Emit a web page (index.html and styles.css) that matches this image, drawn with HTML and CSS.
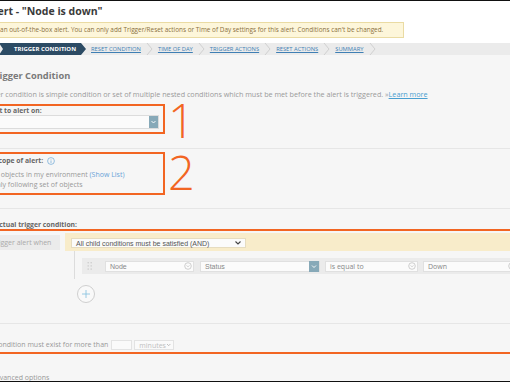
FILE: index.html
```html
<!DOCTYPE html>
<html lang="en">
<head>
    <meta charset="UTF-8">
    <title>Edit Alert - "Node is down"</title>
    <link rel="stylesheet" href="styles.css">
</head>
<body>
<div class="frame">
    <div class="page">
        <!-- header -->
        <div class="header">
            <h1 class="title">Edit Alert - "Node is down"</h1>
            <div class="notice">This is an out-of-the-box alert. You can only add Trigger/Reset actions or Time of Day settings for this alert. Conditions can't be changed.</div>
        </div>

        <!-- wizard steps -->
        <div class="steps">
            <span class="step-active">TRIGGER CONDITION</span>
            <a class="step" href="#">RESET CONDITION</a>
            <svg class="sep" viewBox="0 0 7 12"><polyline points="1,0 6,6 1,12"/></svg>
            <a class="step" href="#">TIME OF DAY</a>
            <svg class="sep" viewBox="0 0 7 12"><polyline points="1,0 6,6 1,12"/></svg>
            <a class="step" href="#">TRIGGER ACTIONS</a>
            <svg class="sep" viewBox="0 0 7 12"><polyline points="1,0 6,6 1,12"/></svg>
            <a class="step" href="#">RESET ACTIONS</a>
            <svg class="sep" viewBox="0 0 7 12"><polyline points="1,0 6,6 1,12"/></svg>
            <a class="step" href="#">SUMMARY</a>
            <svg class="sep" viewBox="0 0 7 12"><polyline points="1,0 6,6 1,12"/></svg>
        </div>

        <div class="content">
            <h2 class="section-title">Trigger Condition</h2>
            <p class="hint">Trigger condition is simple condition or set of multiple nested conditions which must be met before the alert is triggered. &raquo;<a href="#">Learn more</a></p>

            <!-- 1: object to alert on -->
            <div class="marked marked-1">
                <div class="callout">
                    <div class="label">I want to alert on:</div>
                    <div class="select-wide">
                        <span class="drop-btn"><svg viewBox="0 0 9 12"><polyline points="2.5,5 4.5,7 6.5,5"/></svg></span>
                    </div>
                </div>
                <div class="callout-num num-1">1</div>
            </div>

            <div class="divider div-1"></div>

            <!-- 2: scope -->
            <div class="marked marked-2">
                <div class="callout callout-scope">
                    <div class="label label-scope">The scope of alert:
                        <svg class="info" viewBox="0 0 8 8"><circle cx="4" cy="4" r="3.4"/><line x1="4" y1="3.4" x2="4" y2="6"/><line x1="4" y1="2" x2="4" y2="2.6"/></svg>
                    </div>
                    <div class="radio-row"><span class="radio"></span>All objects in my environment <a href="#">(Show List)</a></div>
                    <div class="radio-row"><span class="radio"></span>Only following set of objects</div>
                </div>
                <div class="callout-num num-2">2</div>
            </div>

            <div class="divider div-2"></div>

            <!-- 3: trigger condition -->
            <div class="label label-actual">The actual trigger condition:</div>
            <div class="callout-wide">
                <div class="cond-head">
                    <div class="when">Trigger alert when</div>
                    <div class="and-band">
                        <div class="and-select">
                            <span>All child conditions must be satisfied (AND)</span>
                            <svg viewBox="0 0 8 6"><polyline points="1.5,1.5 4,4 6.5,1.5"/></svg>
                        </div>
                    </div>
                </div>

                <div class="tree">
                    <div class="cond-row">
                        <svg class="handle" viewBox="0 0 6 8">
                            <rect x="0.5" y="0" width="1.4" height="1.4"/><rect x="3.5" y="0" width="1.4" height="1.4"/>
                            <rect x="0.5" y="3.2" width="1.4" height="1.4"/><rect x="3.5" y="3.2" width="1.4" height="1.4"/>
                            <rect x="0.5" y="6.4" width="1.4" height="1.4"/><rect x="3.5" y="6.4" width="1.4" height="1.4"/>
                        </svg>
                        <div class="field field-node"><span>Node</span><svg class="circ" viewBox="0 0 8 8"><circle cx="4" cy="4" r="3.3"/><polyline points="2.6,3.4 4,4.8 5.4,3.4"/></svg></div>
                        <div class="field field-status"><span>Status</span><span class="drop-btn small"><svg viewBox="0 0 10 11"><polyline points="3,4.5 5,6.5 7,4.5"/></svg></span></div>
                        <div class="field field-op"><span>is equal to</span><svg class="circ" viewBox="0 0 8 8"><circle cx="4" cy="4" r="3.3"/><polyline points="2.6,3.4 4,4.8 5.4,3.4"/></svg></div>
                        <div class="field field-val"><span>Down</span><svg class="circ" viewBox="0 0 8 8"><circle cx="4" cy="4" r="3.3"/><polyline points="2.6,3.4 4,4.8 5.4,3.4"/></svg></div>
                    </div>
                </div>

                <div class="add-btn">
                    <svg viewBox="0 0 10 10"><line x1="5" y1="1" x2="5" y2="9"/><line x1="1" y1="5" x2="9" y2="5"/></svg>
                </div>

                <div class="divider div-3"></div>

                <div class="exist-row">
                    <span class="exist-text">The condition must exist for more than</span>
                    <span class="num-input"></span>
                    <span class="unit-select">minutes
                        <svg viewBox="0 0 8 6"><polyline points="1.5,1.5 4,4 6.5,1.5"/></svg>
                    </span>
                </div>
            </div>

            <div class="advanced">Advanced options</div>
        </div>
    </div>
</div>
</body>
</html>
```

FILE: styles.css
```css
* {
    box-sizing: border-box;
}

body {
    margin: 0;
    font-family: 'Open Sans', 'Liberation Sans', sans-serif;
    background: #f6f6f6;
}

.frame {
    height: 382px;
    overflow: hidden;
    border-top: 1px solid #111;
    border-bottom: 1px solid #111;
    background: #f6f6f6;
}

/* the screenshot is cut on the left, so the page starts off-screen */
.page {
    margin-left: -60px;
    width: 570px;
}

.header {
    background: #fff;
    padding: 1px 0 5px;
}

.title {
    margin: 1px 0 0 24px;
    font-size: 10.5px;
    line-height: 16px;
    font-weight: 700;
    color: #3a3a3a;
}

.notice {
    margin: 3px 0 0 30px;
    width: 434px;
    height: 16px;
    padding-left: 9px;
    border: 1px solid #eadba3;
    background: #fdf6da;
    color: #8a7040;
    font-size: 6.4px;
    line-height: 14px;
    white-space: nowrap;
    overflow: hidden;
}

/* wizard */
.steps {
    display: flex;
    align-items: center;
    gap: 5px;
    height: 12px;
    padding-left: 59px;
    background: #ebebeb;
}

.step-active {
    flex-shrink: 0;
    width: 87px;
    height: 12px;
    padding-left: 15px;
    background: #2c4b64;
    color: #fff;
    font-size: 6px;
    font-weight: 700;
    line-height: 12px;
    white-space: nowrap;
    clip-path: polygon(0 0, 82px 0, 87px 50%, 82px 100%, 0 100%, 4px 50%);
}

.step {
    color: #3f7fb4;
    font-size: 5.8px;
    line-height: 12px;
    text-decoration: underline;
    white-space: nowrap;
}

.sep {
    flex-shrink: 0;
    width: 7px;
    height: 12px;
    fill: none;
    stroke: #c9c9c9;
    stroke-width: 0.8;
}

/* content */
.section-title {
    margin: 14px 0 0 50px;
    font-size: 9.3px;
    line-height: 14px;
    font-weight: 700;
    color: #7a7a7a;
}

.hint {
    margin: 6px 0 0 40px;
    font-size: 7.2px;
    line-height: 10px;
    color: #9a9a9a;
    white-space: nowrap;
}

.hint a {
    color: #4a9fd0;
}

.marked {
    display: flex;
    align-items: flex-start;
}

.marked-1 {
    margin-top: 5px;
}

.marked-2 {
    margin-top: 3px;
}

.callout {
    width: 195px;
    margin-left: 30px;
    padding: 1px 4px 3px 9px;
    border: 2px solid #f26522;
}

.callout-scope {
    padding-top: 2px;
}

.label {
    font-size: 6.8px;
    line-height: 8px;
    font-weight: 700;
    color: #666;
    white-space: nowrap;
}

.label-scope {
    display: flex;
    align-items: center;
    gap: 4px;
    line-height: 10px;
}

.info {
    width: 8px;
    height: 8px;
    fill: none;
    stroke: #6aa6d6;
    stroke-width: 0.7;
}

.select-wide {
    display: flex;
    justify-content: flex-end;
    height: 14px;
    border: 1px solid #dcdcdc;
    background: #fbfbfb;
}

.drop-btn {
    display: flex;
    width: 9px;
    height: 12px;
    background: #87a9b8;
}

.drop-btn svg {
    width: 9px;
    height: 12px;
    fill: none;
    stroke: #fff;
    stroke-width: 0.9;
}

.drop-btn.small {
    width: 10px;
    height: 11px;
    margin: -1px 0;
}

.drop-btn.small svg {
    width: 10px;
    height: 11px;
}

.callout-num {
    height: 34px;
    margin: 0 0 -4px 3px;
    font-size: 47px;
    line-height: 34px;
    font-weight: 300;
    color: #f26522;
}

.num-1 {
    margin-top: -1px;
}

.num-2 {
    margin-top: 3px;
}

.radio-row {
    font-size: 7px;
    line-height: 10px;
    color: #999;
    white-space: nowrap;
}

.label-scope + .radio-row {
    margin-top: 4px;
}

.radio-row a {
    color: #6aa3d6;
    text-decoration: none;
}

.radio {
    display: inline-block;
    width: 7px;
    height: 7px;
    margin-right: 3px;
    border: 1px solid #bbb;
    border-radius: 50%;
    vertical-align: -1px;
}

.divider {
    height: 1px;
    background: #e6e6e6;
}

.div-1 {
    margin-top: 14px;
}

.div-2 {
    margin-top: 13px;
}

.div-3 {
    margin-top: 20px;
}

.label-actual {
    margin: 12px 0 0 41px;
}

.callout-wide {
    margin: 0 -10px 0 30px;
    padding-bottom: 1px;
    border: 2px solid #f26522;
}

.cond-head {
    display: flex;
    gap: 5px;
    margin-top: 2px;
}

.when {
    width: 88px;
    height: 15px;
    margin-top: 2px;
    padding-left: 20px;
    background: #ebebeb;
    color: #aaa;
    font-size: 7px;
    line-height: 15px;
    white-space: nowrap;
}

.and-band {
    flex: 1;
    height: 18px;
    padding: 5px 0 0 6px;
    background: #f8ecca;
}

.and-select {
    display: flex;
    align-items: center;
    justify-content: space-between;
    width: 175px;
    height: 10px;
    padding: 0 3px 0 4px;
    border: 1px solid #e6dcc0;
    background: #fbfbfb;
    font-family: 'Liberation Sans', Arial, sans-serif;
    font-size: 7px;
    color: #555;
    white-space: nowrap;
}

.and-select svg,
.unit-select svg {
    width: 8px;
    height: 6px;
    fill: none;
    stroke: #444;
    stroke-width: 1.1;
}

.tree {
    height: 28px;
    margin-left: 102px;
    padding: 7px 0 0 7px;
    border-left: 1px solid #dcdcdc;
}

.cond-row {
    display: flex;
    align-items: center;
    height: 16px;
    padding-left: 5px;
    background: #ebebeb;
}

.handle {
    width: 6px;
    height: 8px;
    margin-right: 12px;
    fill: #cfcfcf;
}

.field {
    display: flex;
    align-items: center;
    justify-content: space-between;
    height: 11px;
    padding: 0 1px 0 4px;
    border: 1px solid #e0e0e0;
    background: #fbfbfb;
    font-size: 7px;
    color: #888;
    white-space: nowrap;
}

.field-node {
    width: 89px;
    font-family: 'Liberation Sans', Arial, sans-serif;
}

.field-status {
    width: 120px;
    margin-left: 6px;
    padding-right: 0;
    font-family: 'Liberation Sans', Arial, sans-serif;
}

.field-op {
    width: 93px;
    margin-left: 5px;
}

.field-val {
    width: 95px;
    margin-left: 5px;
}

.circ {
    width: 8px;
    height: 8px;
    fill: none;
    stroke: #bbb;
    stroke-width: 0.7;
}

.add-btn {
    display: flex;
    align-items: center;
    justify-content: center;
    width: 18px;
    height: 18px;
    margin: 6px 0 0 105px;
    border: 1px solid #cfcfcf;
    border-radius: 50%;
    background: #f9f9f9;
}

.add-btn svg {
    width: 10px;
    height: 10px;
    stroke: #8cc4e0;
    stroke-width: 0.9;
}

.exist-row {
    display: flex;
    align-items: center;
    padding: 16px 0 1px 9px;
}

.exist-text {
    font-size: 7px;
    line-height: 10px;
    color: #999;
    white-space: nowrap;
}

.num-input {
    width: 21px;
    height: 10px;
    margin-left: 3px;
    border: 1px solid #e3e3e3;
    background: #fafafa;
}

.unit-select {
    display: flex;
    align-items: center;
    justify-content: space-between;
    width: 40px;
    height: 10px;
    margin-left: 2px;
    padding: 0 2px 0 4px;
    border: 1px solid #e3e3e3;
    background: #fafafa;
    font-size: 7px;
    color: #c0c0c0;
}

.unit-select svg {
    stroke: #aaa;
}

.advanced {
    margin: 19px 0 0 51px;
    font-size: 7px;
    line-height: 10px;
    color: #999;
}
```
